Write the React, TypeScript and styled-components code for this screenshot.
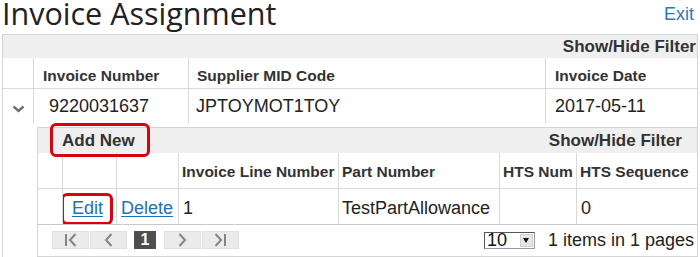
import React from "react";
import styled, { createGlobalStyle } from "styled-components";

const GlobalStyle = createGlobalStyle`
  html, body { margin: 0; padding: 0; background: #ffffff; }
  body {
    font-family: "Liberation Sans", Arial, Helvetica, sans-serif;
    color: #333333;
    width: 700px;
    overflow: hidden;
  }
  * { box-sizing: border-box; }
`;

const Page = styled.div`
  width: 700px;
  height: 257px;
  overflow: hidden;
  padding: 0 2px;
`;

const TitleBar = styled.header`
  display: flex;
  justify-content: space-between;
  align-items: flex-start;
  height: 34px;
`;

const Title = styled.h1`
  margin: 0;
  font-family: "Open Sans", "Noto Sans", "Liberation Sans", sans-serif;
  font-weight: 400;
  font-size: 30.5px;
  line-height: 25px;
  padding-top: 1px;
  color: #222222;
`;

const ExitLink = styled.a`
  margin: 4px 4px 0 0;
  font-size: 18px;
  line-height: 20px;
  color: #2a7ab6;
  text-decoration: none;
  cursor: pointer;
`;

const GridBox = styled.section<{ $nested?: boolean }>`
  border: 1px solid #d4d4d4;
  border-bottom: ${(p) => (p.$nested ? "1px solid #d4d4d4" : "none")};
  border-right: ${(p) => (p.$nested ? "none" : "1px solid #d4d4d4")};
  background: #ffffff;
`;

const Toolbar = styled.div<{ $h: number; $pl: number; $pr: number }>`
  height: ${(p) => p.$h}px;
  background: #efefef;
  display: flex;
  align-items: center;
  justify-content: space-between;
  padding: 0 ${(p) => p.$pr}px 0 ${(p) => p.$pl}px;
  font-weight: bold;
  font-size: 17px;
  color: #333333;
  white-space: nowrap;
`;

const ToolText = styled.span`
  position: relative;
  cursor: pointer;
`;

const Marked = styled.span<{ $t: number; $r: number; $b: number; $l: number }>`
  position: relative;
  &::after {
    content: "";
    position: absolute;
    top: ${(p) => p.$t}px;
    right: ${(p) => p.$r}px;
    bottom: ${(p) => p.$b}px;
    left: ${(p) => p.$l}px;
    border: 3px solid #d9000f;
    border-radius: 6px;
    pointer-events: none;
  }
`;

const Row = styled.div<{ $cols: string; $h: number; $line?: boolean; $pt?: number }>`
  display: grid;
  grid-template-columns: ${(p) => p.$cols};
  height: ${(p) => p.$h}px;
  border-bottom: ${(p) => (p.$line ? "1px solid #d9d9d9" : "none")};
  & > * {
    padding-top: ${(p) => p.$pt ?? 0}px;
  }
`;

const Cell = styled.div<{ $pl?: number; $head?: boolean }>`
  display: flex;
  align-items: center;
  border-right: 1px solid #d9d9d9;
  padding-left: ${(p) => p.$pl ?? 4}px;
  white-space: nowrap;
  overflow: hidden;
  font-size: ${(p) => (p.$head ? "15.5px" : "18px")};
  font-weight: ${(p) => (p.$head ? "bold" : "normal")};
  color: ${(p) => (p.$head ? "#333333" : "#222222")};
  &:last-child {
    border-right: none;
  }
`;

const HierCell = styled(Cell)`
  justify-content: center;
  padding-left: 0;
`;

const GridLink = styled.a`
  color: #1f70b6;
  text-decoration: underline;
  text-underline-offset: 2px;
  cursor: pointer;
`;

const DetailArea = styled.div`
  padding: 4px 0 0 34px;
`;

const Pager = styled.div`
  height: 32px;
  border-top: 1px solid #c9c9c9;
  display: flex;
  align-items: center;
  padding: 0 3px 1px 14px;
`;

const PagerButtons = styled.div`
  display: flex;
  align-items: center;
  flex: 1;
`;

const NavButton = styled.span<{ $gapAfter?: number }>`
  width: 37px;
  height: 18px;
  background: #ebebeb;
  border: 1px solid #e0e0e0;
  display: flex;
  align-items: center;
  justify-content: center;
  margin-right: ${(p) => p.$gapAfter ?? 1}px;
`;

const CurrentPage = styled.span`
  width: 22px;
  height: 18px;
  background: #4e4e52;
  color: #ffffff;
  font-size: 16px;
  font-weight: bold;
  display: flex;
  align-items: center;
  justify-content: center;
  margin-right: 8px;
`;

const PageSize = styled.div`
  width: 51px;
  height: 17px;
  border: 1px solid #9a9a9a;
  border-left-color: #555555;
  border-top-color: #555555;
  display: flex;
  align-items: center;
  justify-content: space-between;
  padding-left: 2px;
  margin-right: 13px;
  font-size: 18px;
  color: #111111;
`;

const DropArrow = styled.span`
  width: 13px;
  height: 13px;
  margin-right: 1px;
  background: #e6e6e6;
  border: 1px solid #d0d0d0;
  display: flex;
  align-items: center;
  justify-content: center;
  &::before {
    content: "";
    border-left: 3.5px solid transparent;
    border-right: 3.5px solid transparent;
    border-top: 5px solid #111111;
  }
`;

const PagerInfo = styled.span`
  font-size: 18px;
  color: #222222;
  white-space: nowrap;
`;

const iconStroke = {
  fill: "none",
  stroke: "#858585",
  strokeWidth: 2,
};

const FirstIcon = () => (
  <svg width="13" height="14" viewBox="0 0 13 14">
    <line x1="2" y1="1" x2="2" y2="13" {...iconStroke} />
    <polyline points="11.5,1 6,7 11.5,13" {...iconStroke} />
  </svg>
);
const PrevIcon = () => (
  <svg width="9" height="14" viewBox="0 0 9 14">
    <polyline points="7.5,1 2,7 7.5,13" {...iconStroke} />
  </svg>
);
const NextIcon = () => (
  <svg width="9" height="14" viewBox="0 0 9 14">
    <polyline points="1.5,1 7,7 1.5,13" {...iconStroke} />
  </svg>
);
const LastIcon = () => (
  <svg width="13" height="14" viewBox="0 0 13 14">
    <polyline points="1.5,1 7,7 1.5,13" {...iconStroke} />
    <line x1="11" y1="1" x2="11" y2="13" {...iconStroke} />
  </svg>
);

const Chevron = () => (
  <svg width="13" height="8" viewBox="0 0 13 8" style={{ marginTop: 4 }}>
    <polyline points="1.5,1.5 6.5,6 11.5,1.5" fill="none" stroke="#6e6e6e" strokeWidth="2.4" />
  </svg>
);

const OUTER_COLS = "31px 155px 357px 151px";
const INNER_COLS = "25px 54px 62px 160px 161px 77px 120px";

export default function App() {
  return (
    <>
      <GlobalStyle />
      <Page>
        <TitleBar>
          <Title>Invoice Assignment</Title>
          <ExitLink>Exit</ExitLink>
        </TitleBar>

        <GridBox>
          <Toolbar $h={23} $pl={4} $pr={1}>
            <span />
            <ToolText>Show/Hide Filter</ToolText>
          </Toolbar>
          <Row $cols={OUTER_COLS} $h={31} $line $pt={5}>
            <Cell $head />
            <Cell $head $pl={9}>Invoice Number</Cell>
            <Cell $head $pl={8}>Supplier MID Code</Cell>
            <Cell $head $pl={9}>Invoice Date</Cell>
          </Row>
          <Row $cols={OUTER_COLS} $h={34} $pt={1}>
            <HierCell>
              <Chevron />
            </HierCell>
            <Cell $pl={15}>9220031637</Cell>
            <Cell $pl={7}>JPTOYMOT1TOY</Cell>
            <Cell $pl={9}>2017-05-11</Cell>
          </Row>
          <DetailArea>
            <GridBox $nested>
              <Toolbar $h={25} $pl={24} $pr={15}>
                <Marked $t={-8} $r={-15} $b={-6} $l={-12}>
                  <ToolText>Add New</ToolText>
                </Marked>
                <ToolText>Show/Hide Filter</ToolText>
              </Toolbar>
              <Row $cols={INNER_COLS} $h={36} $line $pt={3}>
                <Cell $head />
                <Cell $head />
                <Cell $head />
                <Cell $head $pl={3}>Invoice Line Number</Cell>
                <Cell $head $pl={3}>Part Number</Cell>
                <Cell $head $pl={3}>HTS Num</Cell>
                <Cell $head $pl={3}>HTS Sequence</Cell>
              </Row>
              <Row $cols={INNER_COLS} $h={35} $pt={3}>
                <Cell />
                <Cell $pl={9}>
                  <Marked $t={-5} $r={-10} $b={-6} $l={-11}>
                    <GridLink>Edit</GridLink>
                  </Marked>
                </Cell>
                <Cell $pl={4}>
                  <GridLink>Delete</GridLink>
                </Cell>
                <Cell $pl={4}>1</Cell>
                <Cell $pl={3}>TestPartAllowance</Cell>
                <Cell $pl={4} />
                <Cell $pl={4}>0</Cell>
              </Row>
              <Pager>
                <PagerButtons>
                  <NavButton>
                    <FirstIcon />
                  </NavButton>
                  <NavButton $gapAfter={7}>
                    <PrevIcon />
                  </NavButton>
                  <CurrentPage>1</CurrentPage>
                  <NavButton>
                    <NextIcon />
                  </NavButton>
                  <NavButton>
                    <LastIcon />
                  </NavButton>
                </PagerButtons>
                <PageSize>
                  <span>10</span>
                  <DropArrow />
                </PageSize>
                <PagerInfo>1 items in 1 pages</PagerInfo>
              </Pager>
            </GridBox>
          </DetailArea>
        </GridBox>
      </Page>
    </>
  );
}
